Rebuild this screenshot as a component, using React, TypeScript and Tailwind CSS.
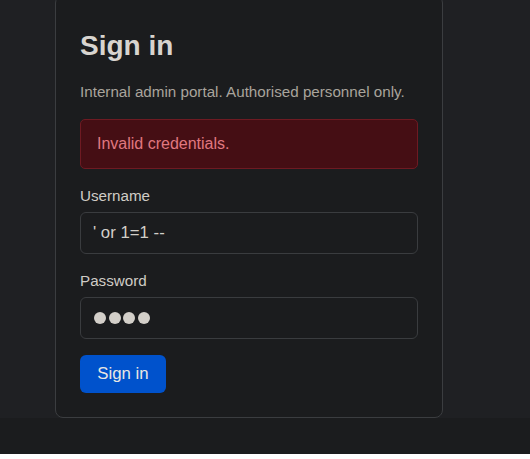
import { useState } from "react";

export default function App() {
  const [username, setUsername] = useState("' or 1=1 --");
  const [password, setPassword] = useState("abcd");

  return (
    <div className="min-h-screen bg-[#1b1c1e] font-['Liberation_Sans',Arial,sans-serif]">
      <div className="bg-[#1f2023]">
        <div className="ml-[55px] -mt-[5px] w-[388px] rounded-lg border border-[#3b3d40] bg-[#1b1c1e] px-6 pb-6 pt-[33px]">
          <h1 className="mb-[18px] text-[28px] font-bold leading-[1.2] text-[#d8d4cf]">Sign in</h1>
          <p className="mb-4 text-[15.2px] leading-[1.5] text-[#a9a49c]">
            Internal admin portal. Authorised personnel only.
          </p>

          <div className="mb-4 rounded-[5px] border border-[#6e1a22] bg-[#450e14] px-4 py-3 text-base leading-6 text-[#e07880]">
            Invalid credentials.
          </div>

          <form onSubmit={e => e.preventDefault()}>
            <div className="mb-4">
              <label className="mb-1 block text-[15.2px] leading-[1.5] text-[#d0ccc6]">Username</label>
              <input
                type="text"
                value={username}
                onChange={e => setUsername(e.target.value)}
                className="block h-[42px] w-full rounded-md border border-[#3a3c3f] bg-[#1b1c1e] px-3 text-[16.8px] text-[#d3cfc9] outline-none"
              />
            </div>
            <div className="mb-4">
              <label className="mb-1 block text-[15.2px] leading-[1.5] text-[#d0ccc6]">Password</label>
              <div className="relative">
                <input
                  type="password"
                  value={password}
                  onChange={e => setPassword(e.target.value)}
                  className="block h-[42px] w-full rounded-md border border-[#3a3c3f] bg-[#1b1c1e] px-3 text-[16.8px] text-transparent caret-[#d3cfc9] outline-none"
                />
                {/* masked value drawn as round dots */}
                <div className="pointer-events-none absolute inset-y-0 left-[14px] flex items-center gap-[2.7px]">
                  {Array.from(password).map((_, i) => (
                    <span key={i} className="h-3 w-3 rounded-full bg-[#d3cfc9]" />
                  ))}
                </div>
              </div>
            </div>
            <button
              type="submit"
              className="h-[38px] w-[86px] rounded-md bg-[#0052cc] text-[16.8px] text-[#e8e6e3]"
            >
              Sign in
            </button>
          </form>
        </div>
      </div>
    </div>
  );
}
